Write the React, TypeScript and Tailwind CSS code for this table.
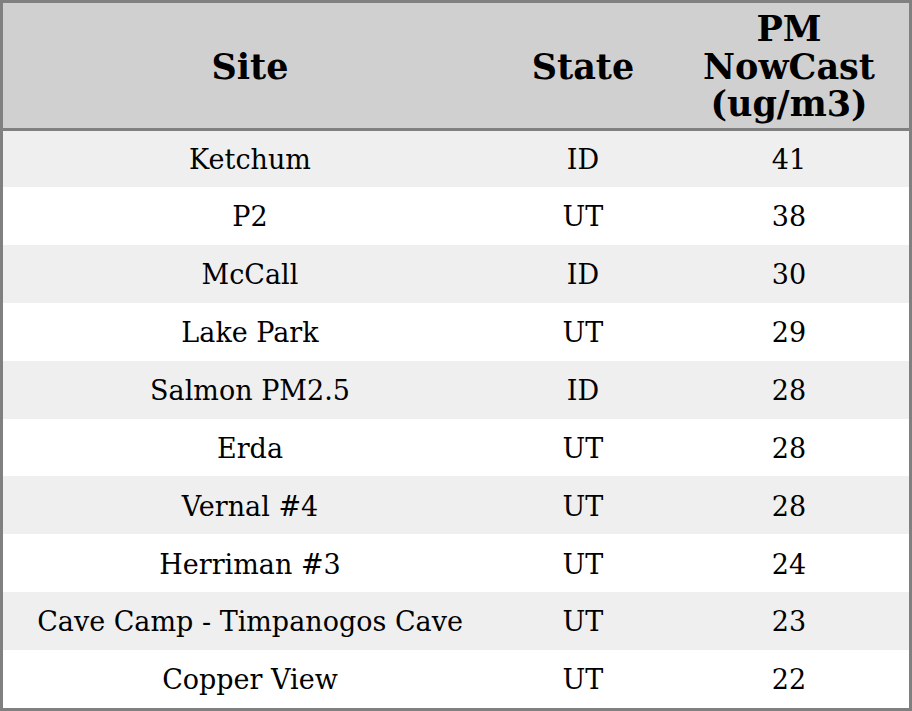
import React from "react";

const rows: [string, string, string][] = [
  ["Ketchum", "ID", "41"],
  ["P2", "UT", "38"],
  ["McCall", "ID", "30"],
  ["Lake Park", "UT", "29"],
  ["Salmon PM2.5", "ID", "28"],
  ["Erda", "UT", "28"],
  ["Vernal #4", "UT", "28"],
  ["Herriman #3", "UT", "24"],
  ["Cave Camp - Timpanogos Cave", "UT", "23"],
  ["Copper View", "UT", "22"],
];

export default function App() {
  return (
    <div
      className="w-[912px] h-[711px] border-[3px] border-[#808080] bg-white flex flex-col text-black"
      style={{ fontFamily: '"DejaVu Serif", serif' }}
    >
      <div className="h-[128px] shrink-0 bg-[#d0d0d0] border-b-[3px] border-[#808080] flex items-center font-bold text-[35px] leading-[37.5px] pt-[2px]">
        <div className="w-[494px] text-center">Site</div>
        <div className="w-[172px] text-center">State</div>
        <div className="flex-1 text-center">
          PM
          <br />
          NowCast
          <br />
          (ug/m3)
        </div>
      </div>
      <div className="flex-1 flex flex-col">
        {rows.map((r, i) => (
          <div
            key={i}
            className={`${i === 0 ? "h-[56px] shrink-0" : "flex-1"} flex items-center text-[27px] pt-[3px] ${i % 2 === 0 ? "bg-[#efefef]" : "bg-white"}`}
          >
            <div className="w-[494px] text-center">{r[0]}</div>
            <div className="w-[172px] text-center">{r[1]}</div>
            <div className="flex-1 text-center">{r[2]}</div>
          </div>
        ))}
      </div>
    </div>
  );
}
